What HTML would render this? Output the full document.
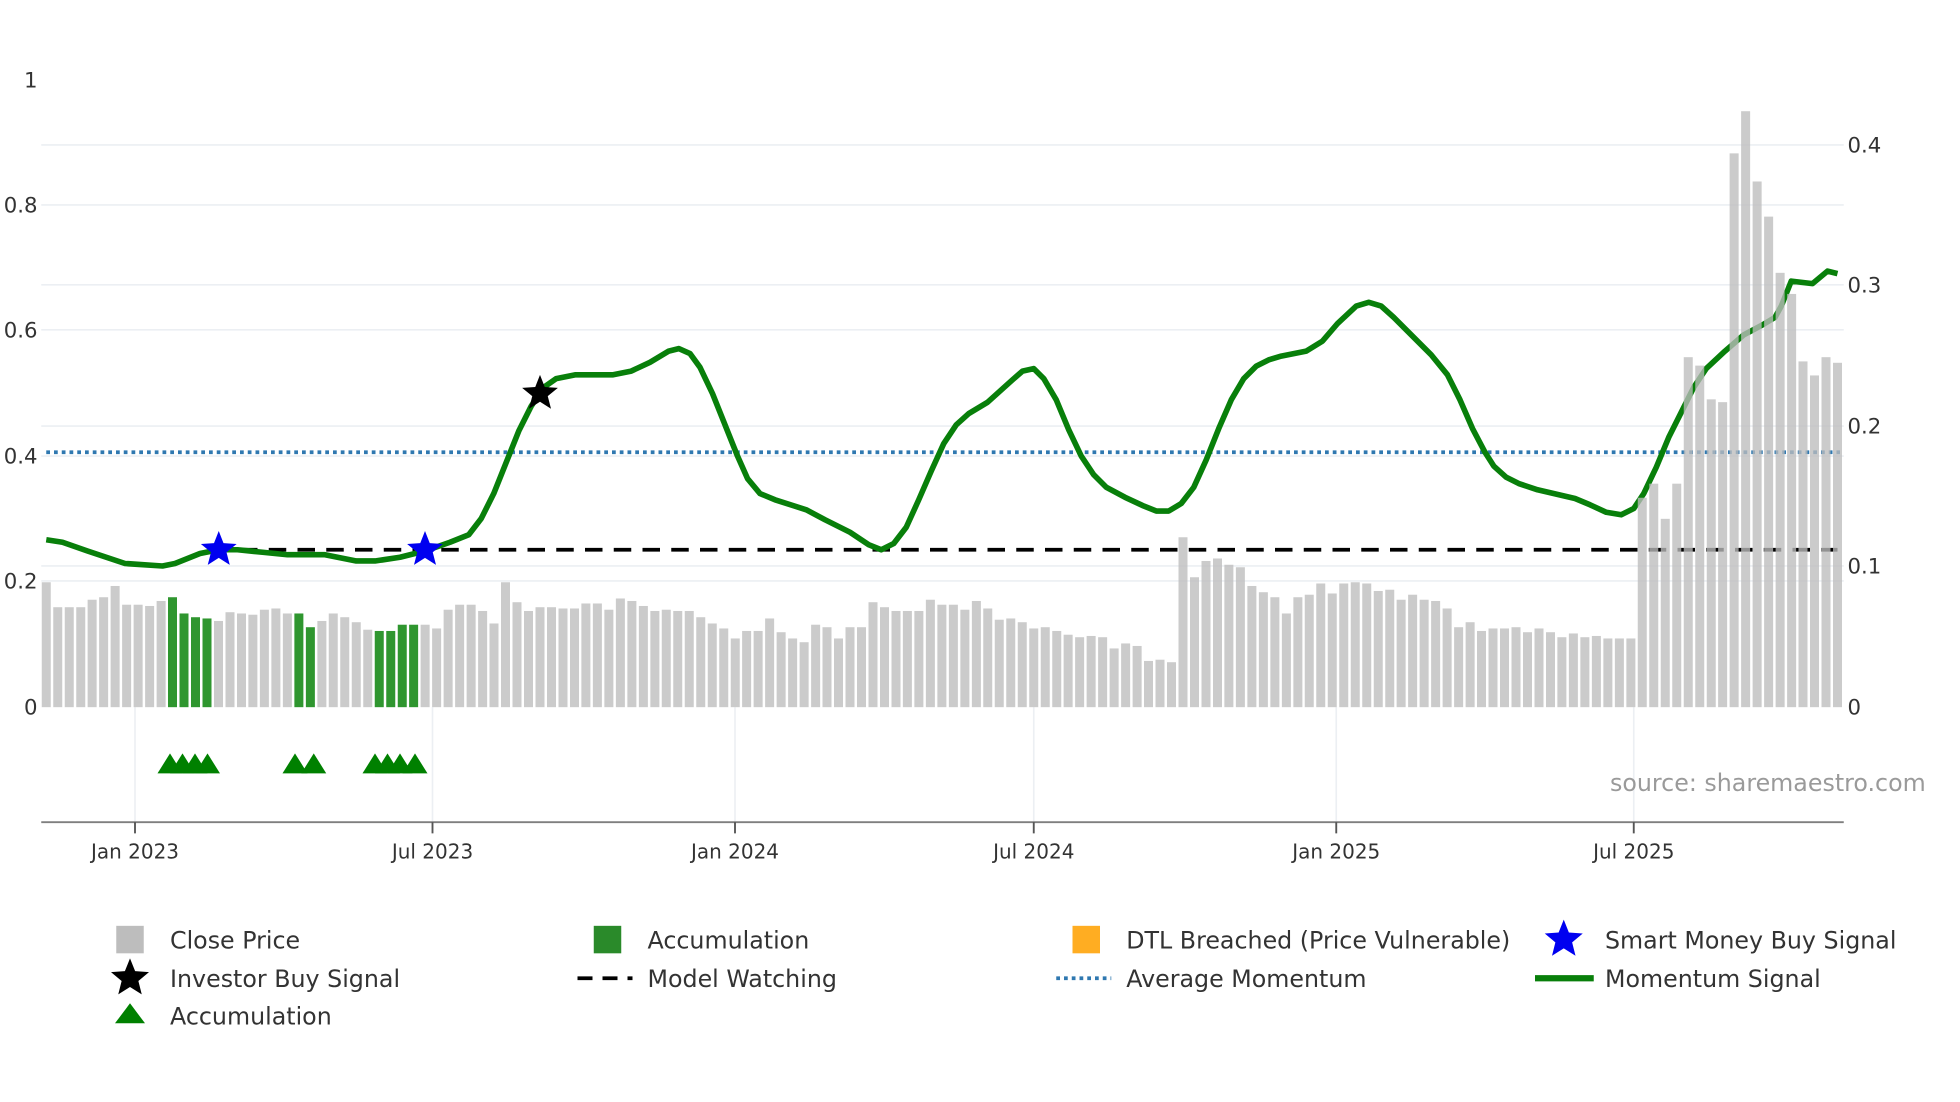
<!DOCTYPE html>
<html><head><meta charset="utf-8"><style>
html,body{margin:0;padding:0;background:#fff;}
svg{display:block;}
text{font-family:"DejaVu Sans","Liberation Sans",sans-serif;}
</style></head><body>
<svg id="s" width="1960" height="1102" viewBox="0 0 1568 882" preserveAspectRatio="none" xmlns="http://www.w3.org/2000/svg">
<g id="grid" stroke="#eceff3" stroke-width="1.3"></g>
<g id="lines"></g>
<g id="bars"></g>
<g id="marks"></g>
<g id="txt" fill="#333" font-size="17"></g>
</svg>
<script>
var NS="http://www.w3.org/2000/svg";
function el(p,t,a,tx){var e=document.createElementNS(NS,t);for(var k in a)e.setAttribute(k,a[k]);if(tx!==undefined)e.textContent=tx;document.getElementById(p).appendChild(e);return e;}
function star(cx,cy,R,r){var p=[];for(var i=0;i<10;i++){var rr=i%2?r:R;var a=-Math.PI/2+i*Math.PI/5;p.push((cx+rr*Math.cos(a)).toFixed(1)+","+(cy+rr*Math.sin(a)).toFixed(1));}return p.join(" ");}
[116,164,228,264,341,365,453,465].forEach(function(y){el("grid","line",{x1:33,x2:1475,y1:y,y2:y});});
[108,346,588,827,1069,1307].forEach(function(x){el("grid","line",{x1:x,x2:x,y1:566,y2:658});});
el("lines","line",{x1:37,x2:1472,y1:362,y2:362,stroke:"#2f78b0","stroke-width":3,"stroke-dasharray":"3,3.2"});
el("lines","line",{x1:192,x2:1470,y1:440,y2:440,stroke:"#000","stroke-width":3,"stroke-dasharray":"14,9"});
var m=[[37,432],[50,434],[70,441],[100,451],[130,453],[140,451],[160,443],[175,440],[190,440],[210,442],[230,444],[260,444],[285,449],[300,449],[320,446],[340,441],[360,434],[375,428],[385,415],[395,395],[405,370],[415,345],[425,325],[435,310],[445,303],[460,300],[490,300],[505,297],[520,290],[535,281],[543,279],[552,283],[560,294],[570,315],[580,340],[590,365],[598,383],[608,395],[620,400],[645,408],[660,416],[680,426],[695,436],[705,440],[715,435],[725,422],[735,400],[745,377],[755,355],[765,340],[775,331],[790,322],[800,313],[810,304],[818,297],[827,295],[835,303],[845,320],[855,344],[865,365],[875,380],[885,390],[900,398],[915,405],[925,409],[935,409],[945,403],[955,390],[965,368],[975,343],[985,320],[995,303],[1005,293],[1015,288],[1025,285],[1045,281],[1058,273],[1070,259],[1085,245],[1095,242],[1105,245],[1115,254],[1130,269],[1145,284],[1158,300],[1168,320],[1178,343],[1188,362],[1195,373],[1205,382],[1215,387],[1230,392],[1260,399],[1272,404],[1285,410],[1297,412],[1307,407],[1315,395],[1325,374],[1335,350],[1345,330],[1355,310],[1365,295],[1380,281],[1395,268],[1410,260],[1420,254],[1425,245],[1433,225],[1450,227],[1462,217],[1470,219]];
el("lines","polyline",{points:m.map(function(p){return p.join(",")}).join(" "),fill:"none",stroke:"#087f0a","stroke-width":4.5,"stroke-linejoin":"round"});
var tops=[466,486,486,486,480,478,469,484,484,485,481,478,491,494,495,497,490,491,492,488,487,491,491,502,497,491,494,498,504,505,505,500,500,500,503,488,484,484,489,499,466,482,489,486,486,487,487,483,483,488,479,481,485,489,488,489,489,494,499,503,511,505,505,495,506,511,514,500,502,511,502,502,482,486,489,489,489,480,484,484,488,481,487,496,495,498,503,502,505,508,510,509,510,519,515,517,529,528,530,430,462,449,447,452,454,469,474,478,491,478,476,467,475,467,466,467,473,472,480,476,480,481,487,502,498,505,503,503,502,506,503,506,510,507,510,509,511,511,511];
[0.149,0.159,0.134,0.159,0.249,0.243,0.219,0.217,0.394,0.424,0.374,0.349,0.309,0.294,0.246,0.236,0.249,0.245].forEach(function(v){tops.push(566-v*1125);});
var green={11:1,12:1,13:1,14:1,22:1,23:1,29:1,30:1,31:1,32:1};
var n=tops.length,sp=(1470-37)/(n-1);
for(var i=0;i<n;i++){var x=37+i*sp;el("bars","rect",{x:(x-3.6).toFixed(1),y:tops[i],width:7.2,height:566-tops[i],fill:green[i]?"#2f962f":"#bdbdbd","fill-opacity":green[i]?1:0.78});}
el("marks","polygon",{points:star(175,440,15,6.5),fill:"#0000f0"});
el("marks","polygon",{points:star(340,440,15,6.5),fill:"#0000f0"});
el("marks","polygon",{points:star(432,315,15,6.5),fill:"#000"});
[136,146,156,166,236,251,300,310,320,332].forEach(function(x){el("marks","polygon",{points:(x-10)+",619 "+x+",603 "+(x+10)+",619",fill:"#008000"});});
el("marks","line",{x1:33,x2:1475,y1:658,y2:658,stroke:"#7f7f7f","stroke-width":1.5});
[108,346,588,827,1069,1307].forEach(function(x){el("marks","line",{x1:x,x2:x,y1:658,y2:667,stroke:"#555","stroke-width":1.5});});
[["1",64],["0.8",164],["0.6",264],["0.4",365],["0.2",465],["0",566]].forEach(function(a){el("txt","text",{x:30,y:a[1]+6,"text-anchor":"end"},a[0]);});
[["0.4",116],["0.3",228],["0.2",341],["0.1",453],["0",566]].forEach(function(a){el("txt","text",{x:1478,y:a[1]+6},a[0]);});
[["Jan 2023",108],["Jul 2023",346],["Jan 2024",588],["Jul 2024",827],["Jan 2025",1069],["Jul 2025",1307]].forEach(function(a){el("txt","text",{x:a[1],y:687,"text-anchor":"middle","font-size":16},a[0]);});
el("txt","text",{x:1288,y:633,fill:"#9a9a9a","font-size":19},"source: sharemaestro.com");
var L=[["Close Price",136,752],["Accumulation",518,752],["DTL Breached (Price Vulnerable)",901,752],["Smart Money Buy Signal",1284,752],["Investor Buy Signal",136,783],["Model Watching",518,783],["Average Momentum",901,783],["Momentum Signal",1284,783],["Accumulation",136,813]];
L.forEach(function(a){el("txt","text",{x:a[1],y:a[2]+7,"font-size":19},a[0]);});
el("marks","rect",{x:93,y:741,width:22,height:22,fill:"#bdbdbd"});
el("marks","rect",{x:475,y:741,width:22,height:22,fill:"#2a8a2a"});
el("marks","rect",{x:858,y:741,width:22,height:22,fill:"#ffad22"});
el("marks","polygon",{points:star(1251,752,16,7),fill:"#0000f0"});
el("marks","polygon",{points:star(104,783,16,7),fill:"#000"});
el("marks","line",{x1:462,x2:506,y1:783,y2:783,stroke:"#000","stroke-width":3,"stroke-dasharray":"12,8"});
el("marks","line",{x1:845,x2:889,y1:783,y2:783,stroke:"#2f78b0","stroke-width":3,"stroke-dasharray":"3,3.2"});
el("marks","line",{x1:1228,x2:1275,y1:783,y2:783,stroke:"#087f0a","stroke-width":5});
el("marks","polygon",{points:"92,819 104,803 116,819",fill:"#008000"});
</script>
</body></html>
